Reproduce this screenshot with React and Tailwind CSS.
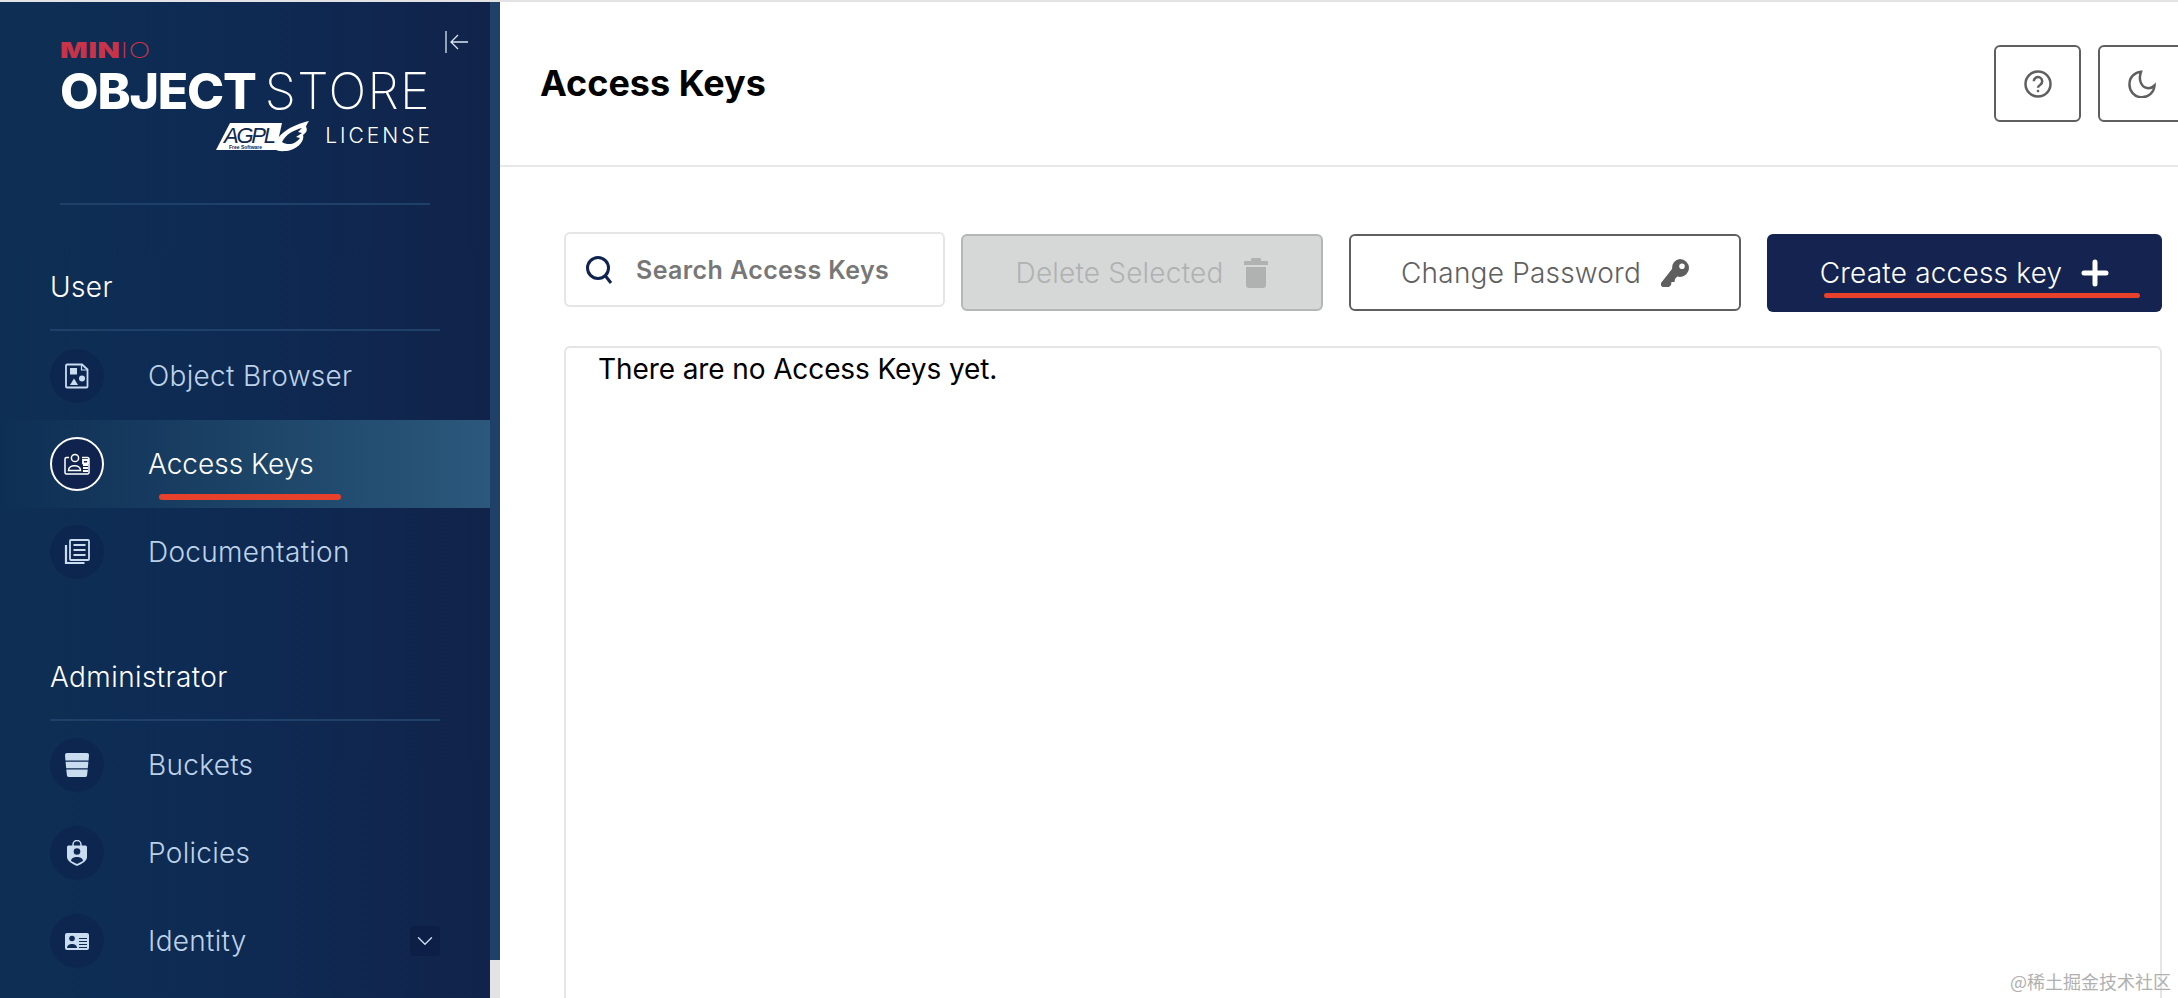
import React from 'react';
import { ChevronDown } from 'lucide-react';

const BrowserIcon = () => (
    <svg width="24" height="26" viewBox="0 0 24 26" fill="none">
        <path d="M2 1.500h15l5.500 5v17a1 1 0 0 1-1 1H2a1 1 0 0 1-1-1v-21a1 1 0 0 1 1-1z" stroke="currentColor" strokeWidth="1.800" />
        <path d="M16.500 1.500v5.500h6" stroke="currentColor" strokeWidth="1.200" />
        <rect x="5" y="5" width="7" height="6.500" fill="currentColor" />
        <circle cx="17" cy="15.500" r="3" fill="currentColor" />
        <path d="M9 15.500l4 6.500H5z" fill="currentColor" />
    </svg>
);

const KeysIcon = () => (
    <svg width="26" height="22" viewBox="0 0 26 22" fill="none" stroke="currentColor" strokeWidth="1.500">
        <path d="M5 4.500H2.500a1.500 1.500 0 0 0-1.500 1.500v13.500a1.500 1.500 0 0 0 1.500 1.500h21a1.500 1.500 0 0 0 1.500-1.500V6a1.500 1.500 0 0 0-1.500-1.500H18" />
        <circle cx="11" cy="5" r="3.600" />
        <path d="M4.500 17.500c0-6.500 12-6.500 12 0z" />
        <path d="M19 7h5v3.300h-5zM19 12h5M19 15h5M19 18h5" strokeWidth="1.800" />
    </svg>
);

const DocsIcon = () => (
    <svg width="26" height="26" viewBox="0 0 26 26" fill="none" stroke="currentColor" strokeWidth="1.800">
        <rect x="6" y="1" width="19" height="20" rx="1" />
        <path d="M9.500 6h12M9.500 11h12M9.500 16h12" />
        <path d="M2 6v18h18.500" strokeWidth="2.200" />
    </svg>
);

const BucketIcon = () => (
    <svg width="24" height="24" viewBox="0 0 24 24" fill="currentColor">
        <path d="M0 2a2 2 0 0 1 2-2h20a2 2 0 0 1 2 2l-.4 5.500H.4z" />
        <path d="M.6 8.800h22.800l-.6 6.400H1.200z" />
        <path d="M1.300 16.500h21.400l-.6 5.800a1.700 1.700 0 0 1-1.700 1.700H3.600a1.700 1.700 0 0 1-1.700-1.700z" />
    </svg>
);

const PolicyIcon = () => (
    <svg width="20" height="26" viewBox="0 0 20 26">
        <path d="M6 6V4.500a4 4 0 0 1 8 0V6" fill="none" stroke="currentColor" strokeWidth="1.500" />
        <path d="M1.500 5.500h17a1.500 1.500 0 0 1 1.500 1.500v10c0 4-6 7.500-10 9-4-1.500-10-5-10-9V7a1.500 1.500 0 0 1 1.500-1.500z" fill="currentColor" />
        <circle cx="10" cy="11.500" r="3.300" fill="#0e2a53" />
        <path d="M4 21c0-5.500 12-5.500 12 0l-6 3z" fill="#0e2a53" />
    </svg>
);

const IdentityIcon = () => (
    <svg width="24" height="17" viewBox="0 0 24 17">
        <rect width="24" height="17" rx="2" fill="currentColor" />
        <circle cx="7" cy="5.500" r="2.800" fill="#0e2a53" />
        <path d="M2 15c0-5.500 10-5.500 10 0z" fill="#0e2a53" />
        <path d="M14 5.500h8M14 8.500h8M14 11.500h8M14 14.500h8" stroke="#0e2a53" strokeWidth="1.100" />
    </svg>
);

const userItems = [
    { label: 'Object Browser', icon: <BrowserIcon /> },
    { label: 'Access Keys', icon: <KeysIcon />, active: true },
    { label: 'Documentation', icon: <DocsIcon /> },
];

const adminItems = [
    { label: 'Buckets', icon: <BucketIcon /> },
    { label: 'Policies', icon: <PolicyIcon /> },
    { label: 'Identity', icon: <IdentityIcon />, expandable: true },
];

const NavItem = ({ item }) => (
    <div className={`relative flex items-center h-[88px] pl-[50px] ${item.active ? 'bg-gradient-to-r from-transparent via-[#1c4467] via-50% to-[#2b587c] text-white' : 'text-[#bdd2e8]'}`}>
        <div className={`flex items-center justify-center w-[54px] h-[54px] rounded-full ${item.active ? 'bg-[#10234f] border-2 border-white' : 'bg-[#0d2650] text-[#c9dcf0]'}`}>
            {item.icon}
        </div>
        <span className={`ml-[44px] text-[28px] leading-[34px] font-light ${item.active ? 'tracking-normal' : 'tracking-[0.3px]'}`}>{item.label}</span>
        {item.expandable && (
            <div className="ml-auto mr-[50px] flex items-center justify-center w-[30px] h-[30px] rounded-sm bg-[#0e1f47] text-[#c9dcf0]">
                <ChevronDown size={26} strokeWidth={1.300} />
            </div>
        )}
        {item.active && <div className="absolute left-[159px] top-[74px] w-[182px] h-[6px] rounded-sm bg-[#e8412b]" />}
    </div>
);

const SectionTitle = ({ children, className }) => (
    <div className={`flex items-end pl-[50px] ${className}`}>
        <div className="w-[390px] border-b-2 border-[#1f4068] pb-[25px] text-[28px] leading-[34px] font-light tracking-[0.4px] text-white">
            {children}
        </div>
    </div>
);

const AgplLogo = () => (
    <svg width="94" height="32" viewBox="0 0 94 32">
        <path d="M0 30 L14 3 H66 L60 30z" fill="#fff" />
        <text x="8" y="23" fontSize="22" fontStyle="italic" fill="#10294f" fontFamily="'Liberation Sans', sans-serif" textLength="52">AGPL</text>
        <text x="13" y="29" fontSize="5" fontWeight="700" fill="#10294f" fontFamily="'Liberation Sans', sans-serif">Free Software</text>
        <path d="M58 28 C60 14 76 5 93 1 C91 4 90 6 90 7 C92 10 90 13 87 15 C89 20 82 30 70 31 C64 31.500 60 31 58 28z" fill="#fff" />
        <path d="M66 22 C70 14 78 10 86 8 L82 12 L86 13 L80 17 L84 18 C80 24 72 26 66 22z" fill="#10294f" />
    </svg>
);

const Logo = () => (
    <div className="relative h-[201px] pl-[60px] pt-[35px]">
        <svg className="absolute left-[445px] top-[28px]" width="24" height="24" viewBox="0 0 24 24" fill="none" stroke="#dbe6f2" strokeWidth="1.300">
            <path d="M1 1v22M23 12H6M13 5l-7 7 7 7" />
        </svg>
        <div className="h-[29px] text-[21px] leading-[27px] text-[#c8334a] tracking-[0.5px] origin-left scale-x-[1.38]">
            <span className="font-black">MIN</span><span className="font-extralight">IO</span>
        </div>
        <div className="flex w-[370px] justify-between items-center h-[50px] text-white text-[50px] leading-[50px]">
            <span className="font-extrabold tracking-[-1.2px]">OBJECT</span>
            <span className="font-extralight tracking-[1.4px] -mr-[1px]">STORE</span>
        </div>
        <div className="flex w-[370px] mt-[4px] justify-end items-center">
            <AgplLogo />
            <span className="ml-[15px] -mr-[3px] text-[21px] leading-[30px] tracking-[3px] font-light text-white">LICENSE</span>
        </div>
    </div>
);

const Sidebar = () => (
    <aside className="flex w-[500px] shrink-0">
        <div className="w-[490px] bg-gradient-to-r from-[#0e2f54] via-[#0e2a53] to-[#11234a]">
            <Logo />
            <div className="ml-[60px] w-[370px] border-b-2 border-[#1f4068]" />
            <SectionTitle className="h-[127px] pb-[1px]">User</SectionTitle>
            {userItems.map(item => <NavItem key={item.label} item={item} />)}
            <SectionTitle className="h-[125px]">Administrator</SectionTitle>
            {adminItems.map(item => <NavItem key={item.label} item={item} />)}
        </div>
        <div className="flex flex-col w-[10px]">
            <div className="h-[958px] bg-[#1f4068]" />
            <div className="flex-1 bg-[#e3e3e5]" />
        </div>
    </aside>
);

const HeaderButton = ({ children }) => (
    <button className="flex items-center justify-center w-[87px] h-[77px] rounded-md border-2 border-[#5f5f5f] text-[#5f5f5f]">
        {children}
    </button>
);

const ActionButton = ({ className, children }) => (
    <button className={`relative flex items-center justify-center rounded-md text-[28px] leading-[34px] font-light tracking-[0.2px] ${className}`}>
        {children}
    </button>
);

export default function App() {
    return (
        <div className="flex flex-col h-screen overflow-hidden bg-white font-['Inter',sans-serif]">
            <div className="h-[2px] shrink-0 bg-[#e3e3e5]" />
            <div className="flex flex-1 min-h-0">
                <Sidebar />
                <main className="relative flex flex-col flex-1 min-w-0 overflow-hidden">
                    <header className="flex items-center shrink-0 h-[165px] pl-[40px] pb-[2px] border-b-2 border-[#e8e8e8]">
                        <h1 className="flex-1 text-[36px] leading-[44px] font-bold text-black">Access Keys</h1>
                        <div className="flex gap-[17px] -mr-[7px] mt-[2px] shrink-0">
                            <HeaderButton>
                                <svg width="28" height="28" viewBox="0 0 28 28" fill="none" stroke="currentColor" strokeWidth="2.500">
                                    <circle cx="14" cy="14" r="12.500" />
                                    <path d="M9.800 11.200a4.200 4.200 0 1 1 6.500 3.500c-1.500 1-2.300 1.600-2.300 3" />
                                    <circle cx="14" cy="21" r="1.300" fill="currentColor" stroke="none" />
                                </svg>
                            </HeaderButton>
                            <HeaderButton>
                                <svg width="28" height="28" viewBox="0 0 28 28" fill="none" stroke="currentColor" strokeWidth="2.500">
                                    <path d="M13 1.800C7 2.300 1.500 7 1.500 14A12.500 12.500 0 0 0 26.500 15.500C24.500 17.500 22 18.500 19 18C13.500 17 10 10 13 1.800z" />
                                </svg>
                            </HeaderButton>
                        </div>
                    </header>
                    <div className="flex flex-col flex-1 min-h-0 pl-[64px] pr-[16px] pt-[65px]">
                        <div className="flex items-start shrink-0">
                            <div className="flex items-center w-[381px] h-[75px] rounded-md border-2 border-[#e5e5e5]">
                                <svg className="ml-[19px]" width="30" height="30" viewBox="0 0 30 30" fill="none" stroke="#10234f" strokeWidth="3">
                                    <circle cx="13" cy="13" r="10.500" />
                                    <path d="M20.500 21l5.500 7" />
                                </svg>
                                <span className="ml-[21px] text-[25px] leading-[30px] font-semibold tracking-[0.4px] text-[#777]">Search Access Keys</span>
                            </div>
                            <ActionButton className="ml-[16px] mt-[2px] w-[362px] h-[77px] bg-[#d6d8d7] border-2 border-[#b5b6b6] text-[#b0b2b2]">
                                Delete Selected
                                <svg className="ml-[21px]" width="24" height="30" viewBox="0 0 24 30" fill="currentColor">
                                    <path d="M8 0h8a1 1 0 0 1 1 1v2h6a1 1 0 0 1 1 1v3H0V4a1 1 0 0 1 1-1h6V1a1 1 0 0 1 1-1z" />
                                    <path d="M2 9h20v18a3 3 0 0 1-3 3H5a3 3 0 0 1-3-3z" />
                                </svg>
                            </ActionButton>
                            <ActionButton className="ml-[26px] mt-[2px] w-[392px] h-[77px] border-2 border-[#5f5f5f] text-[#5f5f5f]">
                                Change Password
                                <svg className="ml-[20px]" width="28" height="28" viewBox="0 0 28 28" fill="currentColor">
                                    <path d="M19 0a9 9 0 0 1 0 18c-1 0-2-.2-2.800-.5L14 20l-.5 3h-3l-.5 3-2 2H1.500L0 26.500V24L11 10A9 9 0 0 1 19 0zm2 4.500a2.800 2.800 0 1 0 0 5.600 2.800 2.800 0 0 0 0-5.600z" />
                                </svg>
                            </ActionButton>
                            <ActionButton className="ml-[26px] mt-[2px] w-[395px] h-[78px] bg-[#14234f] text-white">
                                Create access key
                                <svg className="ml-[19px]" width="28" height="28" viewBox="0 0 28 28" stroke="currentColor" strokeWidth="5" strokeLinecap="round">
                                    <path d="M14 3v22M3 14h22" />
                                </svg>
                                <div className="absolute left-[57px] top-[59px] w-[316px] h-[5px] rounded-sm bg-[#e8412b]" />
                            </ActionButton>
                        </div>
                        <div className="flex-1 mt-[34px] -mb-[10px] rounded-md border-2 border-[#e5e5e5] pl-[32px] pt-[4px]">
                            <p className="text-[28px] leading-[34px] tracking-[-0.1px] text-black">There are no Access Keys yet.</p>
                        </div>
                    </div>
                    <span className="absolute right-[7px] bottom-[6px] text-[18px] leading-[22px] text-[#b0b0b0] font-['Noto_Sans_CJK_SC',sans-serif]">@稀土掘金技术社区</span>
                </main>
            </div>
        </div>
    );
}
